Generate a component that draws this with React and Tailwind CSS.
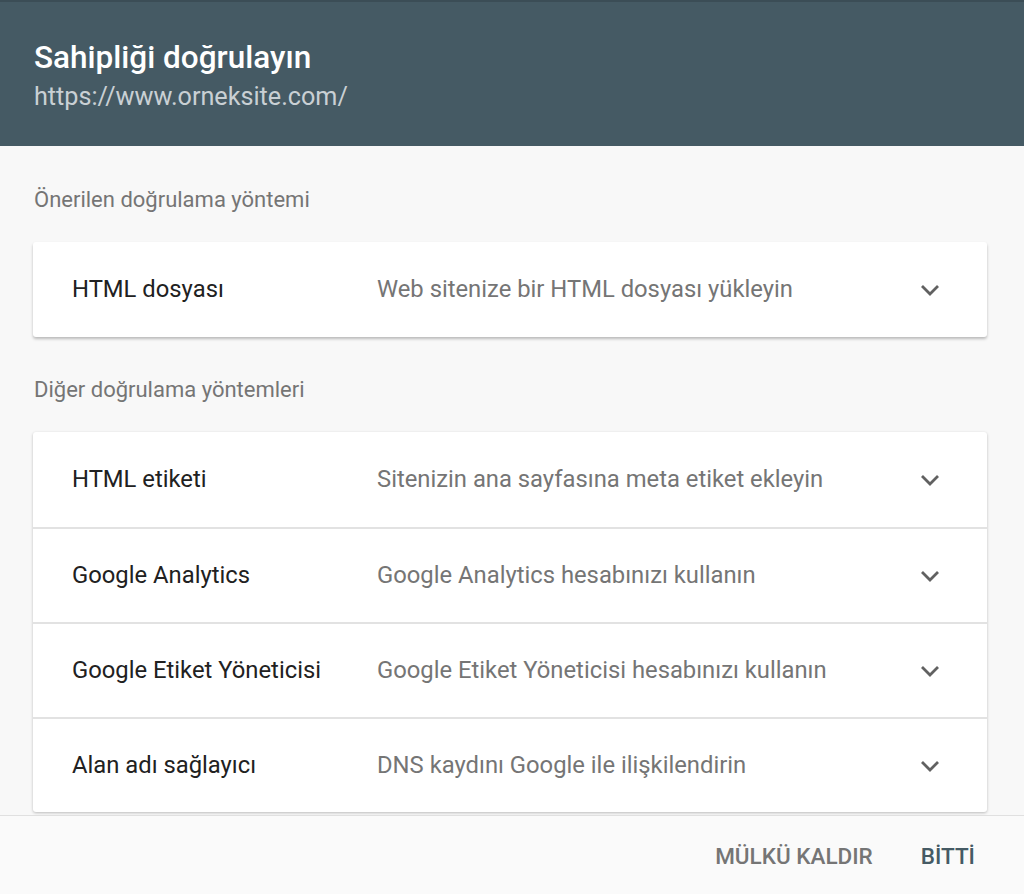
import React from "react";

const others = [
  { name: "HTML etiketi", desc: "Sitenizin ana sayfasına meta etiket ekleyin" },
  { name: "Google Analytics", desc: "Google Analytics hesabınızı kullanın" },
  { name: "Google Etiket Yöneticisi", desc: "Google Etiket Yöneticisi hesabınızı kullanın" },
  { name: "Alan adı sağlayıcı", desc: "DNS kaydını Google ile ilişkilendirin" },
];

function Chevron() {
  return (
    <svg width="20" height="12" viewBox="0 0 20 12" className="text-[#616161] shrink-0">
      <path d="M2 2l8 8 8-8" fill="none" stroke="currentColor" strokeWidth="2.8" />
    </svg>
  );
}

function MethodRow({ name, desc, divider }) {
  return (
    <div className={`flex items-center h-[95px] shrink-0 pl-[39px] pr-[47px] ${divider ? "border-t-2 border-[#e2e2e2]" : ""}`}>
      <div className="w-[305px] text-[23.8px] text-[#212121]">{name}</div>
      <div className="flex-1 text-[23.8px] text-[#757575]">{desc}</div>
      <Chevron />
    </div>
  );
}

export default function App() {
  return (
    <div className="h-[894px] w-[1024px] flex flex-col bg-[#f8f8f8] overflow-hidden" style={{ fontFamily: "Roboto, 'Liberation Sans', sans-serif" }}>
      <div className="h-[146px] shrink-0 bg-[#455a64] border-t-2 border-[#3b4d56] px-[34px] pt-[36px]">
        <h1 className="text-[31.5px] leading-[40px] font-medium text-white">Sahipliği doğrulayın</h1>
        <p className="text-[25.2px] leading-[30px] mt-[4px] text-[#c9d0d4]">https://www.orneksite.com/</p>
      </div>

      <div className="flex-1 overflow-hidden pl-[33px] pr-[37px] pt-[40px]">
        <div className="pl-[1px] text-[22px] leading-[28px] text-[#757575]">Önerilen doğrulama yöntemi</div>
        <div className="mt-[28px] bg-white rounded-[3px] shadow-[0_2px_3px_rgba(0,0,0,0.25)]">
          <MethodRow name="HTML dosyası" desc="Web sitenize bir HTML dosyası yükleyin" />
        </div>

        <div className="mt-[39px] pl-[1px] text-[22px] leading-[28px] text-[#757575]">Diğer doğrulama yöntemleri</div>
        <div className="mt-[28px] bg-white rounded-[3px] shadow-[0_1px_3px_rgba(0,0,0,0.25)] flex flex-col">
          {others.map((m, i) => (
            <MethodRow key={m.name} name={m.name} desc={m.desc} divider={i > 0} />
          ))}
        </div>
      </div>

      <div className="h-[79px] shrink-0 bg-[#fafafa] border-t border-[#e0e0e0] flex items-center justify-end gap-[48px] pr-[49px] pt-[4px]">
        <button className="text-[22.5px] font-medium text-[#757575]">MÜLKÜ KALDIR</button>
        <button className="text-[22.5px] font-medium text-[#455a64]">BİTTİ</button>
      </div>
    </div>
  );
}
